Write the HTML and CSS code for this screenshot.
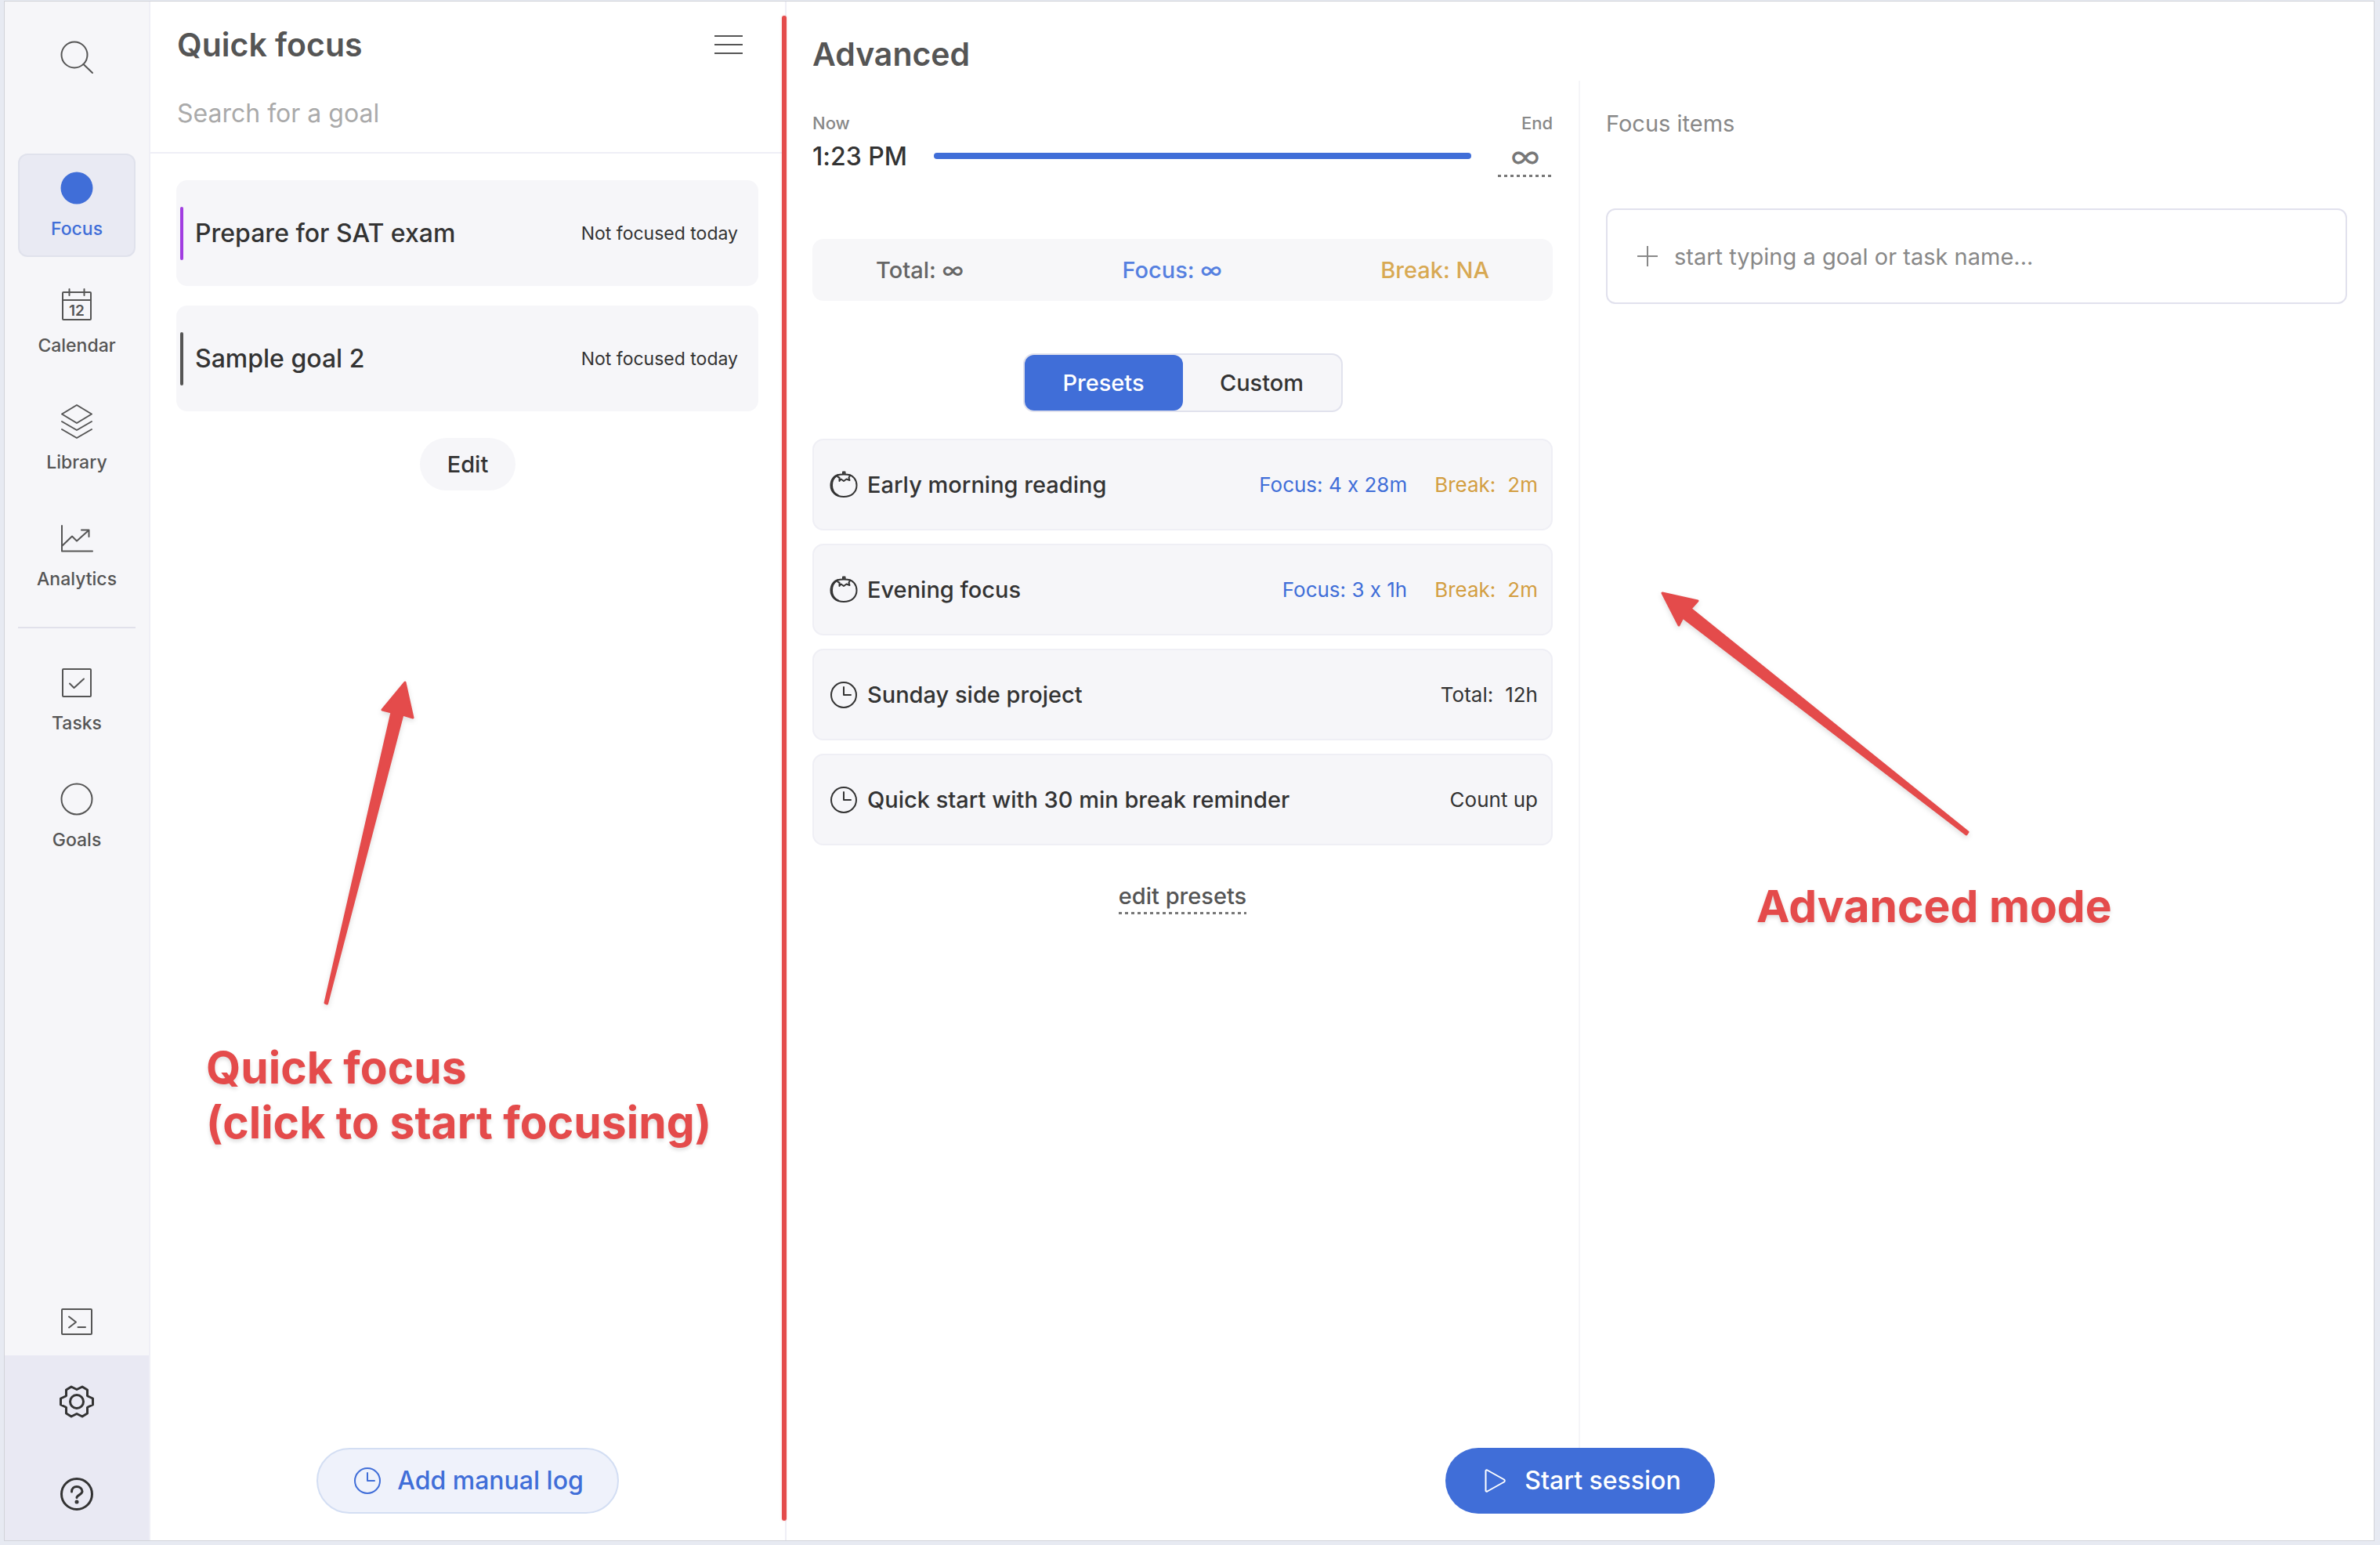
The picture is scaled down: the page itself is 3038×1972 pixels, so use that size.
FILE: index.html
```html
<!DOCTYPE html>
<html lang="en">
<head>
<meta charset="utf-8">
<title>Focus</title>
<link rel="stylesheet" href="styles.css">
</head>
<body>
<svg class="defs" aria-hidden="true">
  <symbol id="clock" viewBox="0 0 36 36">
    <circle cx="18" cy="18" r="16"/>
    <path d="M18 8v10h9"/>
  </symbol>
  <symbol id="tomato" viewBox="0 0 36 36">
    <path d="M12 5C5 6 1.500 11.500 1.500 18.500C1.500 27 8 33 18 33S34.500 27 34.500 18.500C34.500 11 30 6 24 5"/>
    <path d="M9 6.500C5 9 3 13 3 18.500S6 29 11 31.500"/>
    <path d="M10 5.500C13 4 23 4 26 5.500C25.500 7.500 25 8 24.500 8.500L25.500 12L21.500 10.500L18 13L14.500 10.500L12.500 13V8.500C11 8.500 10 7 10 5.500ZM17 4.500V1.500H19.500V4.500"/>
  </symbol>
</svg>
<div class="window">
  <nav class="sidebar" aria-label="Main">
    <button class="icon-button search-button" aria-label="Search">
      <svg class="icon" viewBox="0 0 42 42"><circle cx="18" cy="18" r="16.500"/><path d="M29.500 30L41 41"/></svg>
    </button>
    <div class="nav-list">
      <a class="nav-item active" href="#focus">
        <svg class="icon dot" viewBox="0 0 42 42"><circle cx="21" cy="21" r="20.500"/></svg>
        <span>Focus</span>
      </a>
      <a class="nav-item" href="#calendar">
        <svg class="icon" viewBox="0 0 42 42"><rect x="3" y="5" width="36" height="35" rx="1"/><path d="M3 15h36M11.500 1v8M30.500 1v8"/><text x="21" y="35" text-anchor="middle">12</text></svg>
        <span>Calendar</span>
      </a>
      <a class="nav-item" href="#library">
        <svg class="icon" viewBox="0 0 42 42"><path d="M21 0L40 11.500L21 23L2 11.500ZM2 21L21 32L40 21M2 31L21 42L40 31"/></svg>
        <span>Library</span>
      </a>
      <a class="nav-item" href="#analytics">
        <svg class="icon" viewBox="0 0 42 42"><path d="M2 5v32.500h39M2 31L15 18.500L21 24.500L36 11M27 10.500h9.500V19"/></svg>
        <span>Analytics</span>
      </a>
      <hr>
      <a class="nav-item" href="#tasks">
        <svg class="icon" viewBox="0 0 42 42"><rect x="3" y="4" width="36" height="35" rx="1"/><path d="M12 22.500L17.500 28L30 16.500"/></svg>
        <span>Tasks</span>
      </a>
      <a class="nav-item" href="#goals">
        <svg class="icon" viewBox="0 0 42 42"><circle cx="21" cy="21" r="19.500"/></svg>
        <span>Goals</span>
      </a>
    </div>
    <button class="icon-button terminal" aria-label="Command line">
      <svg class="icon" viewBox="0 0 42 42"><rect x="2" y="5" width="38" height="32" rx="1"/><path d="M11 14.500L20 21.500L11 28.500M22.500 28h9.500"/></svg>
    </button>
    <div class="sidebar-footer">
      <button class="icon-button" aria-label="Settings">
        <svg class="icon gear" viewBox="0 0 44 44"><circle cx="22" cy="22" r="8.500"/><path d="M15 3L22 6.500L29 3L35.500 7V14.500L36 15L42.500 18V26L36 29L35.500 29.500V37L29 41L22 37.500L15 41L8.500 37V29.500L8 29L1.500 26V18L8 15L8.500 14.500V7Z"/></svg>
      </button>
      <button class="icon-button" aria-label="Help">
        <svg class="icon help" viewBox="0 0 42 42"><circle cx="21" cy="21" r="19.500"/><path d="M14.500 18C14.500 13.500 17.500 11.500 21 11.500S28 14 28 17.500C28 21.500 21 22.500 21 25.500"/><circle class="solid" cx="21" cy="31" r="1"/></svg>
      </button>
    </div>
  </nav>

  <section class="quick">
    <header class="quick-header">
      <div class="title-row">
        <h1>Quick focus</h1>
        <button class="icon-button menu" aria-label="Menu">
          <svg class="icon" viewBox="0 0 36 36"><path d="M0 7h36M0 18h36M0 29h36"/></svg>
        </button>
      </div>
      <input class="goal-search" type="text" placeholder="Search for a goal" aria-label="Search for a goal">
    </header>
    <div class="goal-list">
      <button class="goal"><i class="stripe purple"></i><span class="name">Prepare for SAT exam</span><span class="state">Not focused today</span></button>
      <button class="goal"><i class="stripe"></i><span class="name">Sample goal 2</span><span class="state">Not focused today</span></button>
    </div>
    <button class="edit">Edit</button>
    <button class="pill light"><svg class="pill-icon" viewBox="0 0 36 36"><use href="#clock"/></svg>Add manual log</button>

    <i class="note-line"></i>
    <svg class="note-arrow quick-arrow" viewBox="0 0 120 420"><path d="M107 3L117 48L104 44L7.500 413L5 412L90 41L78 38Z"/></svg>
    <p class="note quick-note">Quick focus<br>(click to start focusing)</p>
  </section>

  <section class="advanced">
    <h2>Advanced</h2>
    <div class="columns">
      <div class="setup">
        <div class="timeline">
          <span class="caption">Now</span>
          <span class="caption end-caption">End</span>
          <time>1:23 PM</time>
          <div class="track"></div>
          <button class="end-time dotted" aria-label="End time">∞</button>
        </div>
        <div class="totals">
          <span>Total: ∞</span>
          <span class="blue">Focus: ∞</span>
          <span class="gold">Break: NA</span>
        </div>
        <div class="segmented">
          <button class="selected">Presets</button>
          <button>Custom</button>
        </div>
        <div class="presets">
          <button class="preset"><svg class="preset-icon" viewBox="0 0 36 36"><use href="#tomato"/></svg><span class="name">Early morning reading</span><span class="blue">Focus: 4 x 28m</span><span class="pair gold"><span>Break:</span><span>2m</span></span></button>
          <button class="preset"><svg class="preset-icon" viewBox="0 0 36 36"><use href="#tomato"/></svg><span class="name">Evening focus</span><span class="blue">Focus: 3 x 1h</span><span class="pair gold"><span>Break:</span><span>2m</span></span></button>
          <button class="preset"><svg class="preset-icon" viewBox="0 0 36 36"><use href="#clock"/></svg><span class="name">Sunday side project</span><span class="pair"><span>Total:</span><span>12h</span></span></button>
          <button class="preset"><svg class="preset-icon" viewBox="0 0 36 36"><use href="#clock"/></svg><span class="name">Quick start with 30 min break reminder</span><span>Count up</span></button>
        </div>
        <a class="edit-presets dotted" href="#presets">edit presets</a>
      </div>
      <div class="items">
        <h3>Focus items</h3>
        <label class="item-field">
          <svg class="plus" viewBox="0 0 26 26"><path d="M0 13h26M13 0v26"/></svg>
          <input type="text" placeholder="start typing a goal or task name..." aria-label="Goal or task name">
        </label>
      </div>
    </div>
    <button class="pill primary"><svg class="pill-icon" viewBox="0 0 36 36"><path d="M6.500 5.500C6.500 4.500 7.500 4 8.500 4.500L30 16.500C31 17.200 31 18.800 30 19.500L8.500 31.500C7.500 32 6.500 31.500 6.500 30.500Z"/></svg>Start session</button>

    <svg class="note-arrow advanced-arrow" viewBox="0 0 400 320"><path d="M3 3L48 13L39 23L393 308L391 311L29 34L24 44Z"/></svg>
    <p class="note advanced-note">Advanced mode</p>
  </section>
</div>
</body>
</html>
```
FILE: styles.css
```css
* { box-sizing: border-box; }

body {
  margin: 0;
  min-height: 100vh;
  display: flex;
  padding: 1px 7px 5px 5px;
  background: #e7eaf2;
  color: #333;
  font-family: Inter, "Liberation Sans", sans-serif;
  font-variant-ligatures: no-contextual;
  font-size: 29px;
  line-height: 40px;
}

button, input { font: inherit; font-variant-ligatures: inherit; color: inherit; border: 0; padding: 0; margin: 0; background: none; }
button { cursor: pointer; }
h1, h2, h3, p { margin: 0; }
a { color: inherit; text-decoration: none; }
svg { fill: none; stroke: currentColor; stroke-width: 2; stroke-linecap: round; stroke-linejoin: round; flex: none; overflow: visible; }
.defs { position: absolute; width: 0; height: 0; }
.blue { color: #406ed8; }
.gold { color: #d39e41; }
.dotted { background: linear-gradient(90deg, #777 50%, transparent 50%) left bottom / 8px 3px repeat-x; }

.window {
  flex: 1;
  display: grid;
  grid-template-columns: 186px minmax(0, 812fr) minmax(0, 2026fr);
  border: 1px solid #d2d3d9;
  background: #fff;
}

/* Sidebar */
.sidebar {
  display: flex;
  flex-direction: column;
  background: #f6f6f9;
  border-right: 2px solid #efeff6;
  color: #555;
}
.icon { width: 42px; height: 42px; display: block; }
.icon-button { display: flex; align-items: center; justify-content: center; }
.search-button { height: 142px; }
.nav-list { display: flex; flex-direction: column; gap: 17px; padding: 52px 17px 0; }
.nav-item {
  height: 132px;
  display: flex;
  flex-direction: column;
  align-items: center;
  gap: 16px;
  padding-top: 21px;
  border: 2px solid transparent;
  border-radius: 12px;
  font-size: 23px;
  line-height: 30px;
  font-weight: 500;
}
.nav-item.active { background: #e9eaf3; border-color: #e0e2ec; color: #406ed8; }
.nav-item text { font-size: 19px; font-weight: 600; fill: currentColor; stroke: none; }
.dot circle { fill: currentColor; stroke: none; }
.nav-list hr { width: 100%; height: 2px; margin: 8px 0; border: 0; background: #e1e1eb; }
.terminal { margin-top: auto; height: 86px; }
.sidebar-footer { background: #e9e9f3; color: #333; }
.sidebar-footer .icon-button { width: 100%; height: 118px; }
.gear, .help { stroke-width: 3; }
.gear { width: 44px; height: 44px; }
.solid { fill: currentColor; }

/* Quick focus */
.quick { position: relative; display: flex; flex-direction: column; border-right: 2px solid #efeff6; }
.quick-header { padding: 30px 34px 19px; border-bottom: 2px solid #efeff6; }
.title-row { display: flex; justify-content: space-between; align-items: center; margin-bottom: 32px; }
h1, h2 { font-size: 41px; line-height: 50px; font-weight: 600; color: #555; }
.menu { margin-right: 20px; color: #555; }
.menu .icon { width: 36px; height: 36px; stroke-linecap: butt; }
.goal-search { display: block; width: 100%; height: 60px; margin-bottom: 1px; font-size: 32px; }
.goal-search::placeholder { color: #aaa; opacity: 1; }
.goal-list { display: flex; flex-direction: column; gap: 25px; padding: 34px 34px 34px 33px; }
.goal {
  height: 135px;
  display: flex;
  align-items: center;
  padding: 0 26px 0 5px;
  border-radius: 14px;
  background: #f6f6f9;
  text-align: left;
}
.goal .name { flex: 1; font-size: 32px; font-weight: 500; }
.goal .state { font-size: 23px; }
.stripe { width: 4px; height: 68px; margin-right: 15px; border-radius: 2px; background: #555; }
.purple { background: #a13de0; }
.edit { align-self: center; padding: 0 35px; height: 67px; border-radius: 34px; background: #f6f6f9; font-weight: 500; }

.pill {
  align-self: center;
  display: flex;
  align-items: center;
  height: 84px;
  gap: 20px;
  margin: auto 0 34px;
  padding: 0 43px 0 45px;
  border-radius: 42px;
  font-size: 32px;
  font-weight: 500;
}
.pill-icon { width: 36px; height: 36px; }
.light { border: 2px solid #d3def3; background: #eff2fb; color: #406ed8; }
.primary { margin-top: 0; background: #406ed8; color: #fff; }

/* Advanced */
.advanced { position: relative; display: flex; flex-direction: column; }
.advanced h2 { padding: 42px 33px 9px; }
.columns { flex: 1; display: grid; grid-template-columns: 1fr 1fr; }
.setup { display: flex; flex-direction: column; padding: 39px 33px 0; border-right: 2px solid #f5f5f8; }
.timeline { display: grid; grid-template-columns: auto 1fr 70px; column-gap: 34px; row-gap: 8px; }
.caption { font-size: 22px; line-height: 30px; font-weight: 500; color: #888; }
.end-caption { grid-column: 3; text-align: right; }
time { font-size: 32px; font-weight: 500; }
.track { height: 8px; margin-top: 15px; border-radius: 4px; background: #406ed8; }
.end-time { height: 46px; padding-bottom: 10px; color: #777; font-size: 40px; }
.totals {
  display: flex;
  align-items: center;
  justify-content: space-between;
  height: 79px;
  margin-top: 79px;
  padding: 0 81px;
  border-radius: 14px;
  background: #f7f7f9;
  font-weight: 500;
  color: #666;
}
.totals .blue { color: #5580e0; }
.totals .gold { color: #d8a953; }
.segmented {
  align-self: center;
  display: grid;
  grid-template-columns: 1fr 1fr;
  width: 408px;
  height: 75px;
  margin: 67px 0 34px;
  border: 2px solid #e1e2ed;
  border-radius: 14px;
  background: #f6f6f9;
}
.segmented button { font-weight: 500; border-radius: 12px; }
.segmented .selected { background: #406ed8; color: #fff; }
.presets { display: flex; flex-direction: column; gap: 17px; }
.preset {
  display: flex;
  align-items: center;
  gap: 35px;
  height: 117px;
  padding: 0 17px 0 20px;
  border: 2px solid #efeff5;
  border-radius: 14px;
  background: #f6f6f9;
  font-size: 26px;
}
.preset .name { flex: 1; margin-left: -23px; text-align: left; font-size: 29px; font-weight: 500; }
.preset-icon { width: 36px; height: 36px; }
.pair { display: flex; gap: 15px; }
.edit-presets { align-self: center; height: 43px; margin-top: 45px; color: #555; font-weight: 500; }
.items { padding: 35px 34px 0 33px; }
h3 { font-size: 29px; font-weight: 400; color: #888; }
.item-field {
  display: flex;
  align-items: center;
  gap: 21px;
  height: 122px;
  margin-top: 88px;
  padding: 0 38px;
  border: 2px solid #e1e1ed;
  border-radius: 12px;
  color: #888;
}
.plus { width: 26px; height: 26px; stroke-linecap: butt; }
.item-field input { flex: 1; min-width: 0; height: 60px; }
.item-field input::placeholder { color: #888; opacity: 1; }

/* Notes drawn over the app */
.note-line { position: absolute; top: 18px; bottom: 25px; right: -2px; width: 6px; border-radius: 3px; background: #e44b4b; box-shadow: 0 0 3px #e44b4b44; }
.note, .note-arrow { position: absolute; color: #e44b4b; pointer-events: none; }
.note { font-size: 57px; line-height: 70px; font-weight: 700; white-space: nowrap; text-shadow: 0 3px 5px #0002; }
.note-arrow { fill: #e44b4b; stroke-width: 3; filter: drop-shadow(0 3px 3px #0002); }
.quick-arrow { left: 218px; top: 866px; width: 120px; height: 420px; }
.quick-note { left: 71px; top: 1326px; }
.advanced-arrow { left: 1115px; top: 752px; width: 400px; height: 320px; }
.advanced-note { left: 1238px; top: 1120px; }
```
